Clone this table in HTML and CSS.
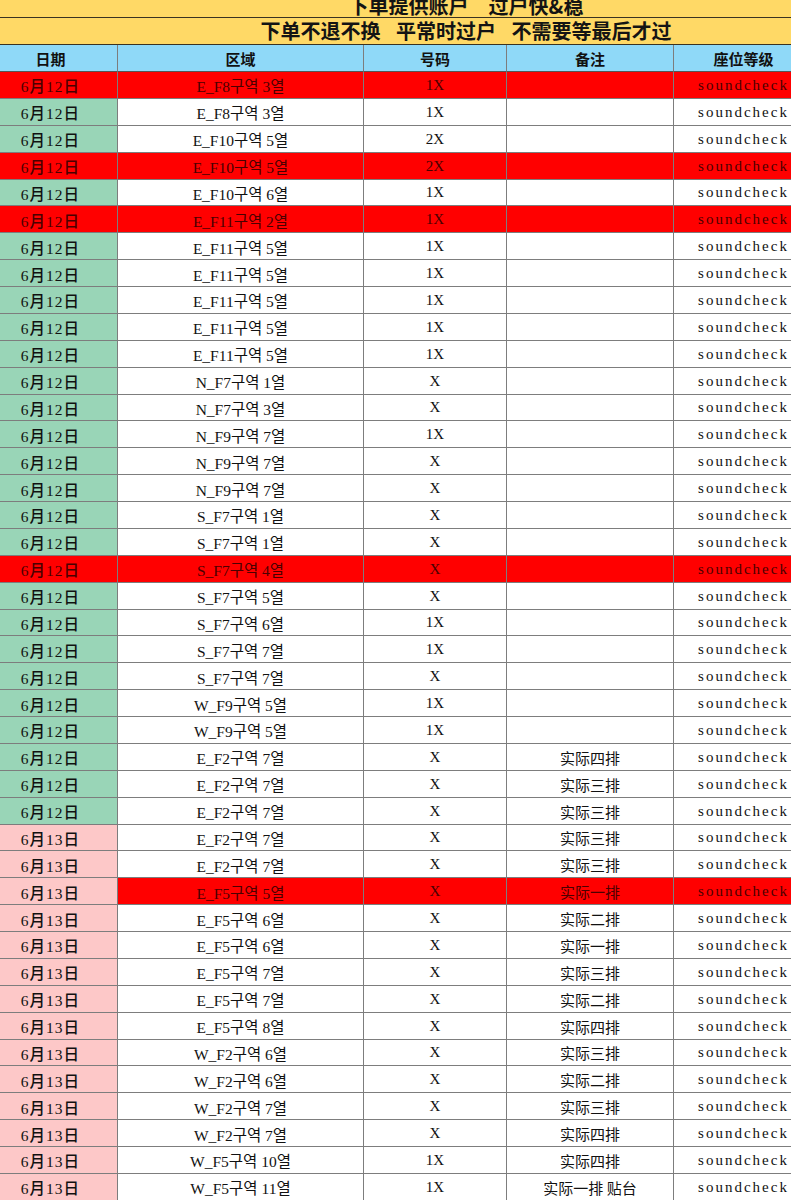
FILE: index.html
```html
<!DOCTYPE html>
<html lang="zh">
<head>
<meta charset="utf-8">
<title>座位表</title>
<link rel="stylesheet" href="styles.css">
</head>
<body>
<div class="sheet">
<div class="grid">
<div class="t1"><span>下单提供账户　过户快&amp;稳</span></div>
<div class="t2">下单不退不换 平常时过户 不需要等最后才过</div>
<div class="c h d">日期</div><div class="c h">区域</div><div class="c h">号码</div><div class="c h">备注</div><div class="c h s">座位等级</div>

<div class="c d r">6月12日</div><div class="c z r">E_F8구역 3열</div><div class="c n r">1X</div><div class="c m r"></div><div class="c s r">soundcheck</div>
<div class="c d g">6月12日</div><div class="c z">E_F8구역 3열</div><div class="c n">1X</div><div class="c m"></div><div class="c s">soundcheck</div>
<div class="c d g">6月12日</div><div class="c z">E_F10구역 5열</div><div class="c n">2X</div><div class="c m"></div><div class="c s">soundcheck</div>
<div class="c d r">6月12日</div><div class="c z r">E_F10구역 5열</div><div class="c n r">2X</div><div class="c m r"></div><div class="c s r">soundcheck</div>
<div class="c d g">6月12日</div><div class="c z">E_F10구역 6열</div><div class="c n">1X</div><div class="c m"></div><div class="c s">soundcheck</div>
<div class="c d r">6月12日</div><div class="c z r">E_F11구역 2열</div><div class="c n r">1X</div><div class="c m r"></div><div class="c s r">soundcheck</div>
<div class="c d g">6月12日</div><div class="c z">E_F11구역 5열</div><div class="c n">1X</div><div class="c m"></div><div class="c s">soundcheck</div>
<div class="c d g">6月12日</div><div class="c z">E_F11구역 5열</div><div class="c n">1X</div><div class="c m"></div><div class="c s">soundcheck</div>
<div class="c d g">6月12日</div><div class="c z">E_F11구역 5열</div><div class="c n">1X</div><div class="c m"></div><div class="c s">soundcheck</div>
<div class="c d g">6月12日</div><div class="c z">E_F11구역 5열</div><div class="c n">1X</div><div class="c m"></div><div class="c s">soundcheck</div>
<div class="c d g">6月12日</div><div class="c z">E_F11구역 5열</div><div class="c n">1X</div><div class="c m"></div><div class="c s">soundcheck</div>
<div class="c d g">6月12日</div><div class="c z">N_F7구역 1열</div><div class="c n">X</div><div class="c m"></div><div class="c s">soundcheck</div>
<div class="c d g">6月12日</div><div class="c z">N_F7구역 3열</div><div class="c n">X</div><div class="c m"></div><div class="c s">soundcheck</div>
<div class="c d g">6月12日</div><div class="c z">N_F9구역 7열</div><div class="c n">1X</div><div class="c m"></div><div class="c s">soundcheck</div>
<div class="c d g">6月12日</div><div class="c z">N_F9구역 7열</div><div class="c n">X</div><div class="c m"></div><div class="c s">soundcheck</div>
<div class="c d g">6月12日</div><div class="c z">N_F9구역 7열</div><div class="c n">X</div><div class="c m"></div><div class="c s">soundcheck</div>
<div class="c d g">6月12日</div><div class="c z">S_F7구역 1열</div><div class="c n">X</div><div class="c m"></div><div class="c s">soundcheck</div>
<div class="c d g">6月12日</div><div class="c z">S_F7구역 1열</div><div class="c n">X</div><div class="c m"></div><div class="c s">soundcheck</div>
<div class="c d r">6月12日</div><div class="c z r">S_F7구역 4열</div><div class="c n r">X</div><div class="c m r"></div><div class="c s r">soundcheck</div>
<div class="c d g">6月12日</div><div class="c z">S_F7구역 5열</div><div class="c n">X</div><div class="c m"></div><div class="c s">soundcheck</div>
<div class="c d g">6月12日</div><div class="c z">S_F7구역 6열</div><div class="c n">1X</div><div class="c m"></div><div class="c s">soundcheck</div>
<div class="c d g">6月12日</div><div class="c z">S_F7구역 7열</div><div class="c n">1X</div><div class="c m"></div><div class="c s">soundcheck</div>
<div class="c d g">6月12日</div><div class="c z">S_F7구역 7열</div><div class="c n">X</div><div class="c m"></div><div class="c s">soundcheck</div>
<div class="c d g">6月12日</div><div class="c z">W_F9구역 5열</div><div class="c n">1X</div><div class="c m"></div><div class="c s">soundcheck</div>
<div class="c d g">6月12日</div><div class="c z">W_F9구역 5열</div><div class="c n">1X</div><div class="c m"></div><div class="c s">soundcheck</div>
<div class="c d g">6月12日</div><div class="c z">E_F2구역 7열</div><div class="c n">X</div><div class="c m">实际四排</div><div class="c s">soundcheck</div>
<div class="c d g">6月12日</div><div class="c z">E_F2구역 7열</div><div class="c n">X</div><div class="c m">实际三排</div><div class="c s">soundcheck</div>
<div class="c d g">6月12日</div><div class="c z">E_F2구역 7열</div><div class="c n">X</div><div class="c m">实际三排</div><div class="c s">soundcheck</div>
<div class="c d p">6月13日</div><div class="c z">E_F2구역 7열</div><div class="c n">X</div><div class="c m">实际三排</div><div class="c s">soundcheck</div>
<div class="c d p">6月13日</div><div class="c z">E_F2구역 7열</div><div class="c n">X</div><div class="c m">实际三排</div><div class="c s">soundcheck</div>
<div class="c d p">6月13日</div><div class="c z r">E_F5구역 5열</div><div class="c n r">X</div><div class="c m r">实际一排</div><div class="c s r">soundcheck</div>
<div class="c d p">6月13日</div><div class="c z">E_F5구역 6열</div><div class="c n">X</div><div class="c m">实际二排</div><div class="c s">soundcheck</div>
<div class="c d p">6月13日</div><div class="c z">E_F5구역 6열</div><div class="c n">X</div><div class="c m">实际一排</div><div class="c s">soundcheck</div>
<div class="c d p">6月13日</div><div class="c z">E_F5구역 7열</div><div class="c n">X</div><div class="c m">实际三排</div><div class="c s">soundcheck</div>
<div class="c d p">6月13日</div><div class="c z">E_F5구역 7열</div><div class="c n">X</div><div class="c m">实际二排</div><div class="c s">soundcheck</div>
<div class="c d p">6月13日</div><div class="c z">E_F5구역 8열</div><div class="c n">X</div><div class="c m">实际四排</div><div class="c s">soundcheck</div>
<div class="c d p">6月13日</div><div class="c z">W_F2구역 6열</div><div class="c n">X</div><div class="c m">实际三排</div><div class="c s">soundcheck</div>
<div class="c d p">6月13日</div><div class="c z">W_F2구역 6열</div><div class="c n">X</div><div class="c m">实际二排</div><div class="c s">soundcheck</div>
<div class="c d p">6月13日</div><div class="c z">W_F2구역 7열</div><div class="c n">X</div><div class="c m">实际三排</div><div class="c s">soundcheck</div>
<div class="c d p">6月13日</div><div class="c z">W_F2구역 7열</div><div class="c n">X</div><div class="c m">实际四排</div><div class="c s">soundcheck</div>
<div class="c d p">6月13日</div><div class="c z">W_F5구역 10열</div><div class="c n">1X</div><div class="c m">实际四排</div><div class="c s">soundcheck</div>
<div class="c d p">6月13日</div><div class="c z">W_F5구역 11열</div><div class="c n">1X</div><div class="c m">实际一排 贴台</div><div class="c s">soundcheck</div>
</div>
</div>
</body>
</html>
```
FILE: styles.css
```css
html, body {
  margin: 0;
  padding: 0;
  background: #ffffff;
}
.sheet {
  width: 791px;
  height: 1200px;
  overflow: hidden;
}
.grid {
  display: grid;
  width: 824px;
  margin-left: -16px;
  grid-template-columns: 134px 246px 143px 167px 134px;
  grid-template-rows: 18px 27px 27px repeat(42, 26.88px);
  font-family: "Liberation Serif", "Noto Sans CJK SC", serif;
  color: #111;
}
.t1, .t2 {
  grid-column: 1 / -1;
  background: #ffd966;
  box-sizing: border-box;
  border-bottom: 1px solid #3a3321;
  font-family: "Noto Sans CJK SC", sans-serif;
  font-weight: 700;
  font-size: 20px;
  text-align: center;
  padding-left: 140px;
  color: #141414;
}
.t1 {
  line-height: 12px;
  overflow: hidden;
}
.t2 {
  line-height: 26px;
  word-spacing: 11px;
}
.c {
  box-sizing: border-box;
  border-right: 1px solid #7d7d7d;
  border-bottom: 1px solid #7d7d7d;
  display: flex;
  align-items: center;
  justify-content: center;
  font-size: 15px;
  white-space: nowrap;
  padding-top: 1px;
  background: #ffffff;
}
.h {
  background: #8fd9f8;
  font-family: "Noto Sans CJK SC", sans-serif;
  font-weight: 700;
  font-size: 15px;
  border-bottom-color: #555;
}
.d {
  padding-right: 16px;
  padding-left: 16px;
}
.d:not(.h) {
  font-weight: 500;
  letter-spacing: 1px;
  font-size: 15.5px;
}
.g {
  background: #99d5b7;
}
.p {
  background: #fdc8c8;
}
.r {
  background: #ff0000;
  color: #4a0000;
}
.z {
  font-family: "Liberation Serif", "Noto Sans CJK KR", serif;
  font-size: 15.5px;
}
.n {
  font-size: 15px;
}
.m {
  font-family: "Noto Sans CJK SC", sans-serif;
  font-size: 15px;
}
.s {
  padding-left: 5px;
  border-right: none;
}
.s:not(.h) {
  letter-spacing: 2px;
  font-size: 15px;
}
```
